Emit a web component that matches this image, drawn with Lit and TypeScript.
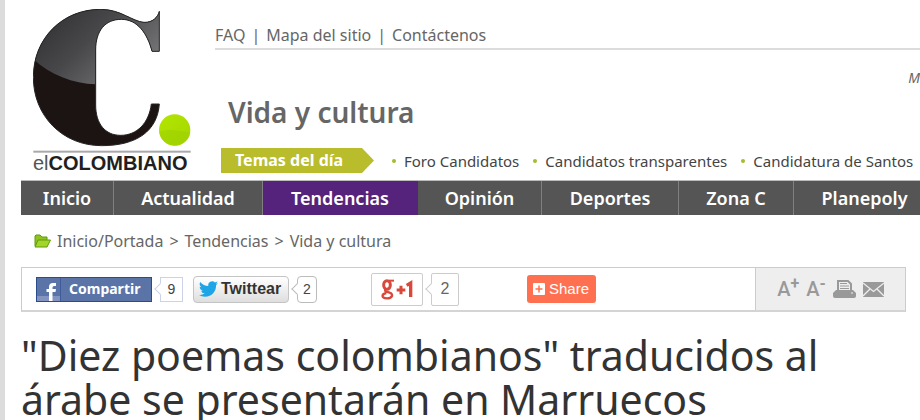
import { LitElement, html, css } from "lit";
import { customElement } from "lit/decorators.js";
import { classMap } from "lit/directives/class-map.js";

const SECTIONS = ["Inicio", "Actualidad", "Tendencias", "Opinión", "Deportes", "Zona C", "Planepoly"];
const TOPICS = ["Foro Candidatos", "Candidatos transparentes", "Candidatura de Santos"];

@customElement("site-logo")
class SiteLogo extends LitElement {
  static styles = css`
    :host { display: block; width: 158px; }
    svg { display: block; width: 158px; height: 144px; }
    .name {
      font: bold 20px/20px "Liberation Sans", sans-serif;
      color: #231f20;
      white-space: nowrap;
    }
    .el { font-weight: normal; color: #555; }
  `;
  render() {
    return html`
      <svg viewBox="99 27 474 432" aria-hidden="true">
        <defs>
          <linearGradient id="gloss" x1="0" y1="0" x2="1" y2="0.6">
            <stop offset="0" stop-color="#2c2c2e" />
            <stop offset="0.5" stop-color="#48484a" />
            <stop offset="1" stop-color="#77777a" />
          </linearGradient>
          <linearGradient id="dot" x1="0" y1="0" x2="1" y2="1">
            <stop offset="0" stop-color="#b4e600" />
            <stop offset="1" stop-color="#a3d600" />
          </linearGradient>
          <clipPath id="c">
            <path d="M478 34V154H456C442 100 412 58 364 58C316 58 287 92 287 150V315C287 372 316 406 362 406C410 406 447 370 454 312H478C472 392 412 437 305 437C186 437 100 346 100 232C100 114 188 28 302 28C362 28 396 64 432 67C458 68 473 52 478 34Z" />
          </clipPath>
        </defs>
        <g clip-path="url(#c)">
          <rect x="99" y="27" width="400" height="420" fill="#1c1413" />
          <path d="M99 27H490V253H287C220 250 150 225 99 176Z" fill="url(#gloss)" />
        </g>
        <path d="M478 34V154H456C442 100 412 58 364 58C316 58 287 92 287 150V315C287 372 316 406 362 406C410 406 447 370 454 312H478C472 392 412 437 305 437C186 437 100 346 100 232C100 114 188 28 302 28C362 28 396 64 432 67C458 68 473 52 478 34Z" fill="none" stroke="#262324" stroke-width="3" />
        <circle cx="524" cy="390" r="47" fill="url(#dot)" />
        <path d="M478 396C505 384 540 392 571 398A47 47 0 0 1 478 396Z" fill="#9fd000" opacity="0.6" />
        <rect x="100" y="452" width="472" height="6" fill="#a9a9a9" />
      </svg>
      <div class="name"><span class="el">el</span>COLOMBIANO</div>
    `;
  }
}

@customElement("share-bar")
class ShareBar extends LitElement {
  static styles = css`
    :host { display: flex; border: 1px solid #ccc; border-bottom: 2px solid #d4d4d4; height: 42px; }
    button { font: inherit; margin: 0; padding: 0; cursor: pointer; box-sizing: border-box; display: flex; align-items: center; }
    svg { display: block; flex: none; }
    .share { flex: 1; display: flex; align-items: center; padding-left: 14px; }
    .pair { display: flex; align-items: center; gap: 8px; }
    .tw { margin-left: 10px; }
    .gp { margin-left: 54px; }
    .fb-button {
      width: 116px; height: 25px; border: 1px solid #2b4c8c; background: #5b74a8; color: #fff;
      font: bold 14px/20px "Noto Sans", sans-serif;
    }
    .fb-button svg { margin-right: 8px; }
    .tw-button {
      width: 96px; height: 27px; border: 1px solid #c4c4c4; border-radius: 4px; gap: 3px; padding-left: 5px;
      background: linear-gradient(#fff, #dedede); color: #333;
      font: bold 16px/20px "Liberation Sans", sans-serif;
    }
    .gp-button {
      width: 52px; height: 33px; border: 1px solid #ccc; border-radius: 2px; background: #fff;
      justify-content: center;
    }
    .more-button {
      width: 69px; height: 28px; margin-left: 68px; border: 0; border-radius: 3px; background: #ff7050; color: #fff;
      gap: 4px; padding-left: 6px;
      font: 15px/20px "Liberation Sans", sans-serif;
    }
    .count {
      position: relative; box-sizing: border-box; display: flex; align-items: center; justify-content: center;
      border: 1px solid #bbb; background: #fff; color: #444;
      font: 14px/20px "Liberation Sans", sans-serif;
    }
    .count::before {
      content: ""; position: absolute; left: -5px; top: 50%; width: 8px; height: 8px; margin-top: -4px;
      box-sizing: border-box; border: solid #bbb; border-width: 0 0 1px 1px; background: #fff; transform: rotate(45deg);
    }
    .count.fb { width: 23px; height: 25px; border-color: #ccd3e8; }
    .count.fb::before { border-color: #ccd3e8; }
    .count.twc { width: 20px; height: 27px; border-radius: 4px; }
    .count.gpc { width: 28px; height: 33px; border-color: #ccc; border-radius: 2px; font-size: 16px; color: #666; }
    .count.gpc::before { border-color: #ccc; }
    .tools {
      box-sizing: border-box; width: 150px; border-left: 1px solid #ccc; background: #eee;
      display: flex; align-items: center; justify-content: center; gap: 7px;
    }
    .tools button { border: 0; background: none; color: #999; }
    .size { font: 500 20px/24px Roboto, sans-serif; }
    .size sup { font: bold 16px/14px Roboto, sans-serif; align-self: flex-start; }
  `;
  render() {
    return html`
      <div class="share">
        <div class="pair">
          <button class="fb-button">
            <svg width="24" height="23" viewBox="0 0 24 23" aria-hidden="true">
              <rect y="18" width="24" height="5" fill="#8294bf" />
              <path d="M23.500 0V23" stroke="#3f5b99" />
              <path d="M12 23V14H9.500V11H12V9Q12 5 16 5H19V8H17Q15.500 8 15.500 9.500V11H19L18.500 14H15.500V23Z" fill="#fff" />
            </svg>
            Compartir
          </button>
          <span class="count fb">9</span>
        </div>
        <div class="pair tw">
          <button class="tw-button">
            <svg width="19" height="16" viewBox="0 0 24 20" aria-hidden="true">
              <path fill="#1da5e8" d="M23.950 2.570a10 10 0 0 1-2.820.770 4.950 4.950 0 0 0 2.160-2.720 9.900 9.900 0 0 1-3.120 1.180 4.920 4.920 0 0 0-8.390 4.490A14 14 0 0 1 1.640 1.160a4.920 4.920 0 0 0 1.520 6.570 4.900 4.900 0 0 1-2.230-.610 4.920 4.920 0 0 0 3.950 4.890 5 5 0 0 1-2.210.080 4.940 4.940 0 0 0 4.600 3.420A9.870 9.870 0 0 1 0 17.540a14 14 0 0 0 7.550 2.210c9.050 0 14-7.500 14-13.980l-.020-.640a9.900 9.900 0 0 0 2.420-2.560Z" />
            </svg>
            Twittear
          </button>
          <span class="count twc">2</span>
        </div>
        <div class="pair gp">
          <button class="gp-button" aria-label="+1">
            <svg width="32" height="21" viewBox="0 0 96 63" fill="none" stroke="#d9483b" aria-hidden="true">
              <ellipse cx="18" cy="18" rx="10" ry="13" stroke-width="9" />
              <path d="M24 5H39" stroke-width="6" />
              <path d="M14 31C8 38 18 38 26 41C38 45 35 58 18 58C0 58 1 45 16 42" stroke-width="7" />
              <path d="M47 33H73M60 20V46" stroke-width="9" />
              <path d="M77 19L89 12V54" stroke-width="10" />
            </svg>
          </button>
          <span class="count gpc">2</span>
        </div>
        <button class="more-button">
          <svg width="12" height="12" viewBox="0 0 12 12" aria-hidden="true">
            <rect width="12" height="12" rx="1" fill="#fff" />
            <path d="M6 2.500V9.500M2.500 6H9.500" stroke="#ff7050" stroke-width="1.500" />
          </svg>
          Share
        </button>
      </div>
      <div class="tools">
        <button class="size">A<sup>+</sup></button>
        <button class="size">A<sup>-</sup></button>
        <button aria-label="Imprimir">
          <svg width="23" height="18" viewBox="0 0 23 18" aria-hidden="true">
            <path d="M5 11V1H15L18 4V11" fill="#eee" stroke="#999" stroke-width="2" />
            <path d="M7 3.500H14M7 6H16M7 8.500H16" stroke="#999" />
            <path d="M3 10H20L23 13V16Q23 18 21 18H2Q0 18 0 16V13Z" fill="#999" />
            <path d="M18 13H20" stroke="#eee" />
          </svg>
        </button>
        <button aria-label="Enviar">
          <svg width="21" height="15" viewBox="0 0 21 15" aria-hidden="true">
            <rect width="21" height="15" fill="#999" />
            <path d="M0 1L10.500 9.500L21 1M0 14L7 7M21 14L14 7" fill="none" stroke="#eee" stroke-width="1.300" />
          </svg>
        </button>
      </div>
    `;
  }
}

@customElement("app-root")
class AppRoot extends LitElement {
  static styles = css`
    :host {
      display: block; overflow: hidden; background: #fff; color: #666;
      border-left: 5px solid #dcdcdc; padding-left: 16px;
      font: 16px/20px "Noto Sans", sans-serif;
    }
    a { color: inherit; text-decoration: none; }
    h1, h2, ul { margin: 0; padding: 0; list-style: none; }
    .header { display: flex; gap: 24px; padding: 9px 0 0 12px; height: 171px; }
    .main { flex: 1; min-width: 0; }
    .links { display: flex; gap: 6px; padding: 16px 0 3px; border-bottom: 2px solid #dcdcdc; white-space: nowrap; }
    .date { height: 20px; margin-top: 18px; text-align: right; font-size: 14px; font-style: italic; }
    h2 { margin: 4px 0 0 13px; font: 600 28px/40px "Noto Sans", sans-serif; }
    .topics { display: flex; align-items: center; margin: 16px 0 0 6px; color: #444; font-size: 15px; white-space: nowrap; }
    .label {
      flex: none; box-sizing: border-box; width: 153px; height: 25px; padding-left: 14px; background: #b9bd2c; color: #fff;
      font: bold 16px/25px "Noto Sans", sans-serif;
      clip-path: polygon(0 0, 141px 0, 153px 50%, 141px 100%, 0 100%);
    }
    .topics ul { display: flex; gap: 14px; margin-left: 18px; }
    .topics li { display: flex; align-items: center; gap: 8px; }
    .topics li::before { content: ""; width: 4px; height: 4px; border-radius: 2px; background: #a3bd2c; }
    .nav {
      display: grid; grid-template-columns: 93px 149px 155px 124px 137px 115px 141px;
      background: #555; border-top: 1px solid #bbb; color: #fff;
      font: 600 18px/34px "Noto Sans", sans-serif; text-align: center; white-space: nowrap;
    }
    .nav a { border-right: 1px solid #808080; }
    .nav a:last-child { border: 0; }
    .nav a.active { background: #55237c; border-color: #55237c; }
    .crumbs { display: flex; align-items: center; gap: 6px; padding: 16px 0 0 13px; white-space: nowrap; }
    share-bar { margin: 16px 14px 0 0; }
    h1 { margin-top: 21px; padding-right: 14px; color: #333; font: 41px/44px "Noto Sans", sans-serif; }
  `;
  render() {
    return html`
      <header class="header">
        <site-logo></site-logo>
        <div class="main">
          <div class="links">
            <a href="#">FAQ</a><span>|</span><a href="#">Mapa del sitio</a><span>|</span><a href="#">Contáctenos</a>
          </div>
          <div class="date">M</div>
          <h2>Vida y cultura</h2>
          <div class="topics">
            <span class="label">Temas del día</span>
            <ul>${TOPICS.map((t) => html`<li><a href="#">${t}</a></li>`)}</ul>
          </div>
        </div>
      </header>
      <nav class="nav">
        ${SECTIONS.map((s) => html`<a href="#" class=${classMap({ active: s === "Tendencias" })}>${s}</a>`)}
      </nav>
      <div class="crumbs">
        <svg width="17" height="14" viewBox="0 0 17 14" aria-hidden="true">
          <path d="M1 12V2L2 1H6L8 3H13V6" fill="#8fc320" stroke="#5d9a10" />
          <path d="M1 13L4 6H16.500L13 13Z" fill="#a6d52a" stroke="#5d9a10" />
        </svg>
        <a href="#">Inicio/Portada</a><span>&gt;</span><a href="#">Tendencias</a><span>&gt;</span><a href="#">Vida y cultura</a>
      </div>
      <share-bar></share-bar>
      <h1>"Diez poemas colombianos" traducidos al árabe se presentarán en Marruecos</h1>
    `;
  }
}
